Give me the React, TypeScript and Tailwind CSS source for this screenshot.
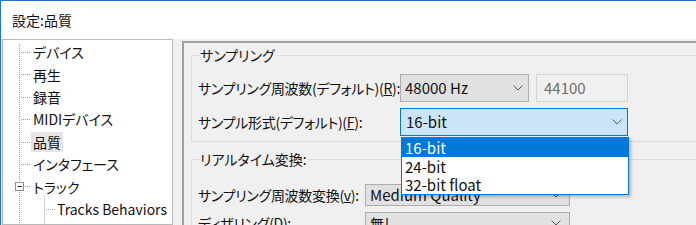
import React from "react";

const font = "font-['Noto_Sans_CJK_JP','Noto_Sans',sans-serif] [font-feature-settings:'palt']";

function Chevron() {
  return (
    <svg width="10" height="6" viewBox="0 0 10 6" className="shrink-0">
      <path d="M0.5 0.5 L5 5 L9.5 0.5" fill="none" stroke="#5a5a5a" strokeWidth="1" />
    </svg>
  );
}

const treeItems: { label: string; indent: number; selected?: boolean }[] = [
  { label: "デバイス", indent: 30 },
  { label: "再生", indent: 30 },
  { label: "録音", indent: 30 },
  { label: "MIDIデバイス", indent: 30 },
  { label: "品質", indent: 30, selected: true },
  { label: "インタフェース", indent: 30 },
  { label: "トラック", indent: 30 },
  { label: "Tracks Behaviors", indent: 54 },
];

function TreeLines() {
  const ys = [0, 1, 2, 3, 4, 5].map((i) => Math.round(12 + i * 22.4) + 0.5);
  const trackY = Math.round(12 + 6 * 22.4) + 0.5;
  const tbY = Math.round(12 + 7 * 22.4) + 0.5;
  return (
    <svg className="absolute left-0 top-0" width="170" height="190">
      <line x1="16.5" y1="4" x2="16.5" y2="190" stroke="#a0a0a0" strokeDasharray="1 1" />
      {ys.map((y) => (
        <line key={y} x1="18" y1={y} x2="28" y2={y} stroke="#a0a0a0" strokeDasharray="1 1" />
      ))}
      <rect x="12.5" y={trackY - 4} width="8" height="8" fill="#ffffff" stroke="#919191" />
      <line x1="14.5" y1={trackY} x2="19" y2={trackY} stroke="#333" />
      <line x1="22" y1={trackY} x2="28" y2={trackY} stroke="#a0a0a0" strokeDasharray="1 1" />
      <line x1="41.5" y1={trackY + 10} x2="41.5" y2="190" stroke="#a0a0a0" strokeDasharray="1 1" />
      <line x1="43" y1={tbY} x2="52" y2={tbY} stroke="#a0a0a0" strokeDasharray="1 1" />
    </svg>
  );
}

export default function App() {
  return (
    <div className={`relative w-[696px] h-[225px] overflow-hidden bg-[#f0f0f0] border-t border-l border-[#1e72d2] flex flex-col text-[14px] text-[#111] ${font}`}>
      <div className="h-[38px] shrink-0 bg-white flex items-center pl-[11px] text-[14px]">設定:品質</div>
      <div className="flex flex-1 min-h-0">
        <div className="ml-[1px] w-[171px] shrink-0 border border-[#b9b9b9] bg-white relative pt-[1px] overflow-hidden">
          <TreeLines />
          {treeItems.map((it) => (
            <div key={it.label} className="h-[22.4px] flex items-center whitespace-nowrap" style={{ paddingLeft: it.indent }}>
              <span className={`leading-[20px] px-[2px] -ml-[2px] ${it.selected ? "bg-[#e5e5e5]" : ""}`}>{it.label}</span>
            </div>
          ))}
        </div>
        <div className="ml-[9px] mt-[2px] flex-1 min-w-0 border-t-2 border-l-2 border-[#a0a0a0] overflow-hidden">
          <div className="ml-[7px] mt-[12px] w-[560px] border border-[#dcdcdc] relative pt-[18px] pl-[6px] pb-[5px]">
            <span className="absolute left-[7px] -top-[11px] px-[1px] bg-[#f0f0f0] leading-[20px]">サンプリング</span>
            <div className="h-[28px] flex items-center">
              <span className="w-[202px] shrink-0 whitespace-nowrap tracking-[-0.3px]">サンプリング周波数(デフォルト)(<span className="underline">R</span>):</span>
              <div className="w-[129px] h-[28px] shrink-0 bg-[#e1e1e1] border border-[#adadad] flex items-center justify-between pl-[4px] pr-[5px] text-[15px]">
                <span>48000 Hz</span>
                <Chevron />
              </div>
              <div className="ml-[7px] w-[92px] h-[28px] shrink-0 bg-[#f0f0f0] border border-[#d4d4d4] flex items-center pl-[7px] text-[#6d6d6d] text-[15px]">44100</div>
            </div>
            <div className="mt-[6px] h-[28px] flex items-center">
              <span className="w-[202px] shrink-0 whitespace-nowrap tracking-[-0.3px]">サンプル形式(デフォルト)(<span className="underline">F</span>):</span>
              <div className="w-[228px] h-[28px] shrink-0 bg-[#cce4f7] border border-[#0078d7] flex items-center justify-between pl-[5px] pr-[5px] text-[15px]">
                <span>16-bit</span>
                <Chevron />
              </div>
            </div>
          </div>
          <div className="ml-[7px] mt-[17px] w-[560px] border border-[#dcdcdc] relative pt-[24px] pl-[6px] pb-[5px]">
            <span className="absolute left-[7px] -top-[11px] px-[1px] bg-[#f0f0f0] leading-[20px]">リアルタイム変換:</span>
            <div className="h-[22px] flex items-center">
              <span className="w-[167px] shrink-0 whitespace-nowrap tracking-[-0.3px]">サンプリング周波数変換(<span className="underline">v</span>):</span>
              <div className="w-[205px] h-[22px] shrink-0 bg-[#e1e1e1] border border-[#adadad] flex items-center justify-between pl-[4px] pr-[8px] text-[15px]">
                <span>Medium Quality</span>
                <Chevron />
              </div>
            </div>
            <div className="mt-[6px] h-[22px] flex items-center">
              <span className="w-[167px] shrink-0 whitespace-nowrap tracking-[-0.3px]">ディザリング(<span className="underline">D</span>):</span>
              <div className="w-[205px] h-[22px] shrink-0 bg-[#e1e1e1] border border-[#adadad] flex items-center justify-between pl-[4px] pr-[8px]">
                <span>無し</span>
                <Chevron />
              </div>
            </div>
          </div>
        </div>
      </div>
      <div className="absolute left-[400px] top-[136px] w-[228px] h-[58px] bg-white border border-[#0078d7] shadow-[2px_2px_3px_rgba(0,0,0,0.25)] text-[15px]">
        <div className="h-[19px] leading-[19px] pl-[3px] bg-[#0078d7] text-white">16-bit</div>
        <div className="h-[19px] leading-[19px] pl-[3px]">24-bit</div>
        <div className="h-[18px] leading-[18px] pl-[3px]">32-bit float</div>
      </div>
    </div>
  );
}
